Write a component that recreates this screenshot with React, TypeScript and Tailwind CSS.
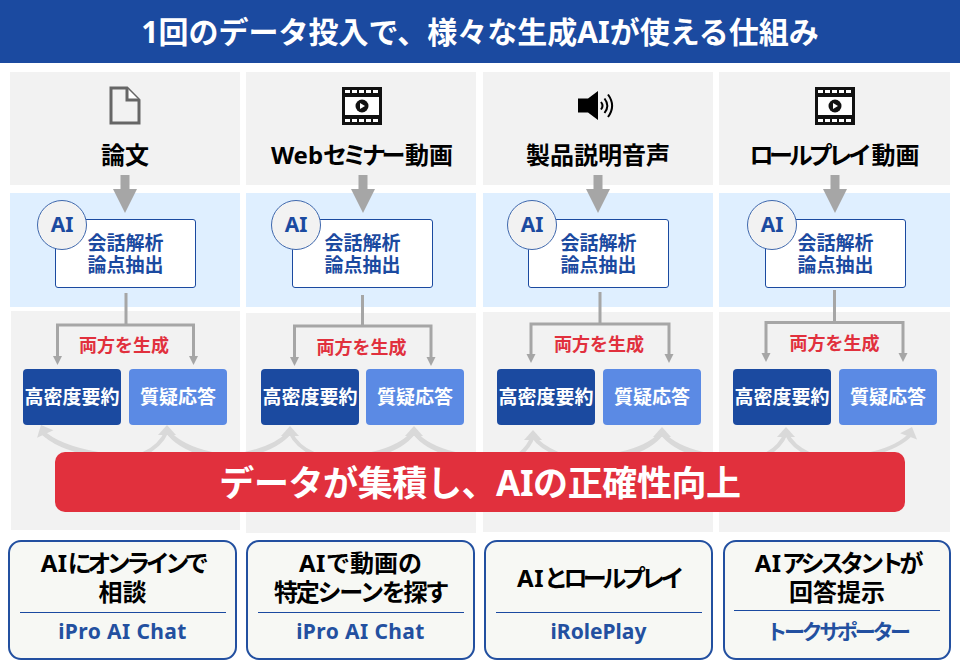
const sans = "[font-family:'Noto_Sans','Noto_Sans_CJK_JP',sans-serif]"

const DocIcon = () => (
  <svg width="32" height="40" viewBox="0 0 32 40" fill="none">
    <path d="M2 2H18L30 14V37H2Z" stroke="#666" strokeWidth="3" fill="#f2f2f2" />
    <path d="M18 2V14H30" stroke="#666" strokeWidth="3" fill="#fff" />
  </svg>
)

const FilmIcon = () => (
  <svg width="40" height="38" viewBox="0 0 40 38">
    <rect width="40" height="38" fill="#111" />
    <rect x="3" y="10" width="34" height="18" fill="#fff" />
    {[3, 10, 17, 24, 31].map((x) => (
      <g key={x} fill="#fff">
        <rect x={x} y="3" width="5" height="3" />
        <rect x={x} y="32" width="5" height="3" />
      </g>
    ))}
    <circle cx="20" cy="19" r="6.5" fill="#111" />
    <path d="M18 16L23 19L18 22Z" fill="#fff" />
  </svg>
)

const SpeakerIcon = () => (
  <svg width="36" height="30" viewBox="0 0 36 30" fill="none">
    <path d="M0 7.5H10L20 0V29L10 21.5H0Z" fill="#000" />
    <path d="M23 11C25 13.5 25 16 23 18.5" stroke="#000" strokeWidth="2" />
    <path d="M26.5 7.5C30 12 30 17.5 26.5 22" stroke="#000" strokeWidth="2" />
    <path d="M30 3.5C35.5 11 35.5 18.5 30 26" stroke="#000" strokeWidth="2" />
  </svg>
)

// kana in the reference are narrower than kanji, so they get their own tracking
type Part = { text: string; cls: string }

const Parts = ({ parts }: { parts: Part[] }) => (
  <>
    {parts.map((part) => (
      <span key={part.text} className={part.cls}>
        {part.text}
      </span>
    ))}
  </>
)

const columns = [
  { key: "paper", title: [{ text: "論文", cls: "" }], icon: <DocIcon />, iconBox: "", titleClass: "", colClass: "", boxClass: "ml-[45px]", circleClass: "left-[27px]", lowerClass: "ml-px mt-[4px] h-[219px]", labelClass: "mt-[22px] pr-[3px]", rowClass: "mt-[12px] pl-[12px] gap-[8px]" },
  { key: "web", title: [{ text: "Web", cls: "" }, { text: "セミナー", cls: "tracking-[-4.5px]" }, { text: "動画", cls: "pl-[4px]" }], icon: <FilmIcon />, iconBox: "pl-[1px]", titleClass: "pl-[2px]", colClass: "", boxClass: "ml-[46px]", circleClass: "left-[25px]", lowerClass: "mt-[6px] h-[220px]", labelClass: "mt-[22px] pl-[1px]", rowClass: "mt-[10px] pl-[15px] gap-[7px]" },
  { key: "voice", title: [{ text: "製品説明音声", cls: "" }], icon: <SpeakerIcon />, iconBox: "pr-[4px]", titleClass: "", colClass: "ml-px", boxClass: "ml-[45px]", circleClass: "left-[24px]", lowerClass: "mt-[5px] h-[220px]", labelClass: "mt-[20px] pl-[2px]", rowClass: "mt-[13px] pl-[14px] gap-[8px]" },
  { key: "role", title: [{ text: "ロールプレイ", cls: "tracking-[-4.3px]" }, { text: "動画", cls: "pl-[4px]" }], icon: <FilmIcon />, iconBox: "", titleClass: "", colClass: "w-[231px]", boxClass: "ml-[46px]", circleClass: "left-[28px]", lowerClass: "mt-[5px] h-[220px]", labelClass: "mt-[19px]", rowClass: "mt-[14px] pl-[14px] gap-[8px]" },
]

const cards = [
  {
    key: "chat",
    lines: [
      [{ text: "AI", cls: "tracking-[0.5px]" }, { text: "にオンラインで", cls: "tracking-[-4.5px]" }],
      [{ text: "相談", cls: "" }],
    ],
    name: "iPro AI Chat",
    cardClass: "w-[229px]",
    titleClass: "h-[70px] pt-[6px]",
    nameClass: "mt-[3px] tracking-[0.4px]",
  },
  {
    key: "video",
    lines: [
      [{ text: "AI", cls: "tracking-[0.5px]" }, { text: "で動画の", cls: "" }],
      [{ text: "特定シーンを探す", cls: "tracking-[-2.2px]" }],
    ],
    name: "iPro AI Chat",
    cardClass: "w-[229px] ml-[9px]",
    titleClass: "h-[70px] pt-[6px]",
    nameClass: "mt-[3px] tracking-[0.4px]",
  },
  {
    key: "roleplay",
    lines: [[{ text: "AI", cls: "tracking-[0.5px]" }, { text: "とロールプレイ", cls: "tracking-[-4.6px]" }]],
    name: "iRolePlay",
    cardClass: "w-[229px] ml-[9px]",
    titleClass: "h-[70px] pt-[21px]",
    nameClass: "mt-[3px]",
  },
  {
    key: "support",
    lines: [
      [{ text: "AI", cls: "tracking-[0.5px]" }, { text: "アシスタントが", cls: "tracking-[-4.2px]" }],
      [{ text: "回答提示", cls: "" }],
    ],
    name: "トークサポーター",
    cardClass: "w-[228px] ml-[10px]",
    titleClass: "h-[68px] pt-[6px]",
    nameClass: "mt-[5px] tracking-[-3.3px]",
  },
]

const bigArrows = [125, 363, 598, 835]

const connectors = [
  { x: 126, top: 293, y: 325, l: 57.5, r: 193.5, tip: 365 },
  { x: 362.5, top: 295, y: 326, l: 294.5, r: 431, tip: 366 },
  { x: 600, top: 292, y: 324, l: 531, r: 669, tip: 363 },
  { x: 834.5, top: 290, y: 322.5, l: 766, r: 903, tip: 362 },
]

const curves = [
  { x: 41, y: 425, rot: -25, from: [92, 98] },
  { x: 167, y: 425, rot: 0, from: [143, 205, 212] },
  { x: 290, y: 426, rot: 0, from: [245, 250, 314] },
  { x: 414, y: 426, rot: 0, from: [372, 378, 450, 455] },
  { x: 533, y: 430, rot: 0, from: [520, 558] },
  { x: 662, y: 427, rot: 0, from: [620, 628, 703, 696] },
  { x: 786, y: 427, rot: 0, from: [767, 809] },
  { x: 912, y: 427, rot: 20, from: [871] },
]

const Overlay = () => (
  <svg className="absolute left-0 top-0 pointer-events-none" width="960" height="660" fill="none">
    {curves.map((c) => (
      <g key={c.x}>
        {c.from.map((sx) => (
          <path
            key={sx}
            d={`M${sx} 454Q${c.x + (sx - c.x) * 0.3} 447 ${c.x} ${c.y + 6}`}
            stroke="#d9d9d9"
            strokeWidth="4"
          />
        ))}
        <path
          d={`M${c.x} ${c.y}L${c.x + 9} ${c.y + 10}H${c.x - 9}Z`}
          fill="#d9d9d9"
          transform={`rotate(${c.rot} ${c.x} ${c.y})`}
        />
      </g>
    ))}
    {connectors.map((c) => (
      <g key={c.x}>
        <path d={`M${c.x} ${c.top}V${c.y}M${c.l} ${c.tip - 8}V${c.y}H${c.r}V${c.tip - 8}`} stroke="#a6a6a6" strokeWidth="3" />
        <path d={`M${c.l - 4.5} ${c.tip - 9}H${c.l + 4.5}L${c.l} ${c.tip}Z`} fill="#a6a6a6" />
        <path d={`M${c.r - 4.5} ${c.tip - 9}H${c.r + 4.5}L${c.r} ${c.tip}Z`} fill="#a6a6a6" />
      </g>
    ))}
    {bigArrows.map((x) => (
      <path key={x} d={`M${x - 4.5} 175H${x + 4.5}V189H${x + 12}L${x} 213L${x - 12} 189H${x - 4.5}Z`} fill="#a6a6a6" />
    ))}
  </svg>
)

export default function App() {
  return (
    <div className={`relative w-[960px] h-[660px] overflow-hidden bg-white font-bold ${sans}`}>
      <div className="h-[63px] bg-[#1b4aa0] flex items-center justify-center text-white text-[30px]">
        1回のデータ投入で、様々な生成AIが使える仕組み
      </div>

      <div className="flex mt-[9px] pl-[10px] gap-[6px]">
        {columns.map((col) => (
          <div key={col.key} className={`w-[230px] flex flex-col ${col.colClass}`}>
            <div className="h-[113px] bg-[#f2f2f2] flex flex-col items-center">
              <div className={`h-[40px] mt-[14px] flex items-center ${col.iconBox}`}>{col.icon}</div>
              <div className={`mt-[12px] text-[24px] leading-[34px] text-black ${col.titleClass}`}>
                <Parts parts={col.title} />
              </div>
            </div>

            <div className="relative mt-[8px] h-[114px] bg-[#dfefff] pt-[26px]">
              <div className={`w-[141px] h-[69px] bg-white border border-[#1b4aa0] rounded-[3px] flex flex-col items-center justify-center text-[#1b4aa0] text-[19px] leading-[22px] ${col.boxClass}`}>
                <div>会話解析</div>
                <div>論点抽出</div>
              </div>
              <div className={`absolute top-[7px] w-[50px] h-[50px] rounded-full bg-[#f2f2f2] border border-[#3f68ad] flex items-center justify-center text-[#1b4aa0] text-[21px] ${col.circleClass}`}>
                AI
              </div>
            </div>

            <div className={`bg-[#f2f2f2] ${col.lowerClass}`}>
              <div className={`h-[24px] flex items-center justify-center text-[#e1303d] text-[18px] ${col.labelClass}`}>両方を生成</div>
              <div className={`flex text-white text-[19px] ${col.rowClass}`}>
                <div className="w-[98px] h-[56px] rounded-[4px] bg-[#1b4aa0] flex items-center justify-center whitespace-nowrap">高密度要約</div>
                <div className="w-[98px] h-[56px] rounded-[4px] bg-[#5b8ae4] flex items-center justify-center whitespace-nowrap">質疑応答</div>
              </div>
            </div>
          </div>
        ))}
      </div>

      <div className="absolute left-0 top-[540px] w-[960px] flex pl-[8px]">
        {cards.map((card) => (
          <div key={card.key} className={`h-[120px] rounded-[13px] border-2 border-[#2350a0] bg-[#f7f8f4] flex flex-col items-center ${card.cardClass}`}>
            <div className={`text-black text-[24px] leading-[29px] text-center ${card.titleClass}`}>
              {card.lines.map((line) => (
                <div key={line[0].text + line.length}>
                  <Parts parts={line} />
                </div>
              ))}
            </div>
            <div className="w-[206px] border-t border-[#1b4aa0]" />
            <div className={`text-[#2350a0] text-[21px] leading-[30px] whitespace-nowrap ${card.nameClass}`}>{card.name}</div>
          </div>
        ))}
      </div>

      <Overlay />

      <div className="absolute left-[55px] top-[452px] w-[850px] h-[60px] rounded-[10px] bg-[#e1303d] flex items-center justify-center text-white text-[35px] tracking-[-0.4px] pt-[2px]">
        データが集積し、AIの正確性向上
      </div>
    </div>
  )
}
